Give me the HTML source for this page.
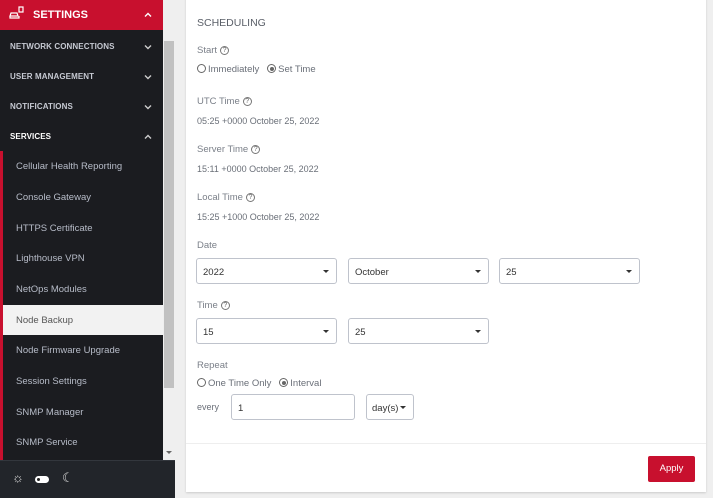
<!DOCTYPE html>
<html><head><style>
*{box-sizing:border-box;margin:0;padding:0}
body{width:713px;height:498px;overflow:hidden;background:#efefef;font-family:"Liberation Sans",sans-serif;position:relative}
.sb{position:absolute;left:0;top:0;width:163px;height:460px;background:#1b1c20}
.hdr{position:absolute;left:0;top:0;width:163px;height:30px;background:#c8102e;color:#fff;font-weight:bold;font-size:11px}
.t{position:absolute;font-size:8px;font-weight:bold;color:#c6c9d2;left:10px;letter-spacing:.1px}
.chev{position:absolute;left:144px;width:8px;height:6px}
.red{position:absolute;left:0;top:151px;width:3px;height:309px;background:#c8102e}
.it{position:absolute;left:16px;font-size:9.5px;color:#b7bcc8}
.sel{position:absolute;left:3px;top:305px;width:160px;height:30px;background:#f2f2f2}
.track{position:absolute;left:163px;top:30px;width:12px;height:430px;background:#efefef}
.thumb{position:absolute;left:164px;top:41px;width:10px;height:347px;background:#c1c1c1}
.foot{position:absolute;left:0;top:460px;width:175px;height:38px;background:#22252a;border-top:1px solid #33373d}
.card{position:absolute;left:186px;top:-5px;width:520px;height:497px;background:#fff;box-shadow:0 1px 2px rgba(0,0,0,.15)}
.l{position:absolute;font-size:9.5px;color:#7a7f88}
.v{position:absolute;font-size:9px;color:#6a6f78}
.v2{position:absolute;font-size:9.5px;color:#6a6f78}
.q{display:inline-block;width:9px;height:9px;border:1px solid #777;border-radius:50%;font-size:7px;line-height:7px;text-align:center;vertical-align:middle;margin-left:3px;color:#666}
.rad{display:inline-block;width:9px;height:9px;border:1px solid #666;border-radius:50%;vertical-align:-1px;margin-right:2px;position:relative}
.rad.on::after{content:"";position:absolute;left:1.5px;top:1.5px;width:4px;height:4px;border-radius:50%;background:#666}
.s{position:absolute;height:26px;border:1px solid #bfc3cc;border-radius:3px;font-size:9.5px;color:#333;padding:8px 6px}
.s.dd::after{content:"";position:absolute;right:7px;top:11px;border:3px solid transparent;border-top:3.5px solid #333}
</style></head><body>
<div class="sb"></div>
<div class="hdr"><svg style="position:absolute;left:8px;top:5px" width="18" height="16" viewBox="0 0 18 16" fill="none" stroke="#fff" stroke-width="1.2"><path d="M3 8h6l1 3h-8zM2 11v2h9v-2M11 2h4v5h-4z"/></svg><span style="position:absolute;left:33px;top:9px">SETTINGS</span><svg class="chev" style="top:12px" viewBox="0 0 8 6"><path d="M1 4.5L4 1.5 7 4.5" fill="none" stroke="#fff" stroke-width="1.4"/></svg></div>
<div class="t" style="top:42px">NETWORK CONNECTIONS</div><svg class="chev" style="top:44px" viewBox="0 0 8 6"><path d="M1 1.5L4 4.5 7 1.5" fill="none" stroke="#ccc" stroke-width="1.4"/></svg>
<div class="t" style="top:72px">USER MANAGEMENT</div><svg class="chev" style="top:74px" viewBox="0 0 8 6"><path d="M1 1.5L4 4.5 7 1.5" fill="none" stroke="#ccc" stroke-width="1.4"/></svg>
<div class="t" style="top:102px">NOTIFICATIONS</div><svg class="chev" style="top:104px" viewBox="0 0 8 6"><path d="M1 1.5L4 4.5 7 1.5" fill="none" stroke="#ccc" stroke-width="1.4"/></svg>
<div class="t" style="top:132px;color:#fff">SERVICES</div><svg class="chev" style="top:134px" viewBox="0 0 8 6"><path d="M1 4.5L4 1.5 7 4.5" fill="none" stroke="#ccc" stroke-width="1.4"/></svg>
<div class="red"></div>
<div class="sel"></div>
<div class="it" style="top:161px">Cellular Health Reporting</div>
<div class="it" style="top:192px">Console Gateway</div>
<div class="it" style="top:223px">HTTPS Certificate</div>
<div class="it" style="top:253px">Lighthouse VPN</div>
<div class="it" style="top:284px">NetOps Modules</div>
<div class="it" style="top:315px;color:#555">Node Backup</div>
<div class="it" style="top:345px">Node Firmware Upgrade</div>
<div class="it" style="top:376px">Session Settings</div>
<div class="it" style="top:407px">SNMP Manager</div>
<div class="it" style="top:437px">SNMP Service</div>
<div class="track"></div><div class="thumb"></div>
<div style="position:absolute;left:166px;top:451px;border:3px solid transparent;border-top:3px solid #666"></div>
<div class="foot">
<span style="position:absolute;left:12px;top:9px;color:#ddd;font-size:13px">☼</span>
<span style="position:absolute;left:35px;top:15px;width:14px;height:7px;background:#fff;border-radius:4px"><span style="position:absolute;left:2px;top:2px;width:3px;height:3px;background:#222;border-radius:50%"></span></span>
<span style="position:absolute;left:62px;top:9px;color:#ddd;font-size:13px">☾</span>
</div>
<div class="card"></div>
<div class="l" style="left:197px;top:17px;font-size:10.5px;color:#5a5f68">SCHEDULING</div>
<div class="l" style="left:197px;top:45px">Start<span class="q">?</span></div>
<div class="v2" style="left:197px;top:64px"><span class="rad"></span>Immediately &nbsp; <span class="rad on"></span>Set Time</div>
<div class="l" style="left:197px;top:96px">UTC Time<span class="q">?</span></div>
<div class="v" style="left:197px;top:116px">05:25 +0000 October 25, 2022</div>
<div class="l" style="left:197px;top:144px">Server Time<span class="q">?</span></div>
<div class="v" style="left:197px;top:164px">15:11 +0000 October 25, 2022</div>
<div class="l" style="left:197px;top:192px">Local Time<span class="q">?</span></div>
<div class="v" style="left:197px;top:212px">15:25 +1000 October 25, 2022</div>
<div class="l" style="left:197px;top:240px">Date</div>
<div class="s dd" style="left:196px;top:258px;width:141px">2022</div>
<div class="s dd" style="left:348px;top:258px;width:141px">October</div>
<div class="s dd" style="left:499px;top:258px;width:141px">25</div>
<div class="l" style="left:197px;top:300px">Time<span class="q">?</span></div>
<div class="s dd" style="left:196px;top:318px;width:141px">15</div>
<div class="s dd" style="left:348px;top:318px;width:141px">25</div>
<div class="l" style="left:197px;top:360px">Repeat</div>
<div class="v2" style="left:197px;top:378px"><span class="rad"></span>One Time Only &nbsp; <span class="rad on"></span>Interval</div>
<div class="v" style="left:197px;top:402px">every</div>
<div class="s" style="left:231px;top:394px;width:124px;height:26px">1</div>
<div class="s dd" style="left:366px;top:394px;width:48px;height:26px;padding-left:5px">day(s)</div>
<div style="position:absolute;left:186px;top:443px;width:520px;border-top:1px solid #eee"></div>
<div style="position:absolute;left:648px;top:456px;width:47px;height:26px;background:#c8102e;color:#fff;font-size:9.5px;text-align:center;line-height:26px;border-radius:2px">Apply</div>
</body></html>
